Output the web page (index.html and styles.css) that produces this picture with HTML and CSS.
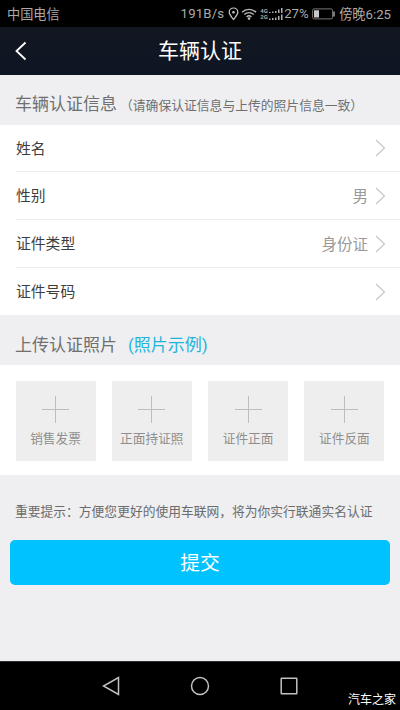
FILE: index.html
```
<!DOCTYPE html>
<html lang="zh-CN">
<head>
<meta charset="utf-8">
<title>车辆认证</title>
<link rel="stylesheet" href="styles.css">
</head>
<body>
<div class="status">
  <span class="carrier">中国电信</span>
  <span class="speed">191B/s</span>
  <svg class="pin" width="11" height="14" viewBox="0 0 11 14"><path d="M5.5 12.500C3.800 10.200 1.200 7.900 1.200 5.300a4.300 4.300 0 0 1 8.600 0c0 2.600-2.600 4.900-4.300 7.200z" fill="none" stroke="#c4c4c4" stroke-width="1.200"/><circle cx="5.500" cy="5.300" r="1.300" fill="#c4c4c4"/></svg>
  <svg class="wifi" width="16" height="12" viewBox="0 0 16 12"><g fill="none" stroke="#b8b8b8" stroke-width="1.400"><path d="M1 4.200a10 10 0 0 1 14 0"/><path d="M3.300 6.600a6.700 6.700 0 0 1 9.400 0"/><path d="M5.600 8.900a3.500 3.500 0 0 1 4.800 0"/></g><circle cx="8" cy="10.600" r="1.300" fill="#b8b8b8"/></svg>
  <span class="net"><span>4G</span><span>2G</span></span>
  <svg class="signal" width="14" height="13" viewBox="0 0 14 13"><g fill="#b0b0b0"><path d="M0 4h1.500v1H0zM3 3.500h1.500V5H3zM6 3h1.500v2H6zM9 1.500h1.500V5H9zM12 0h1.500v5H12z"/><path d="M0 10.500h1.500V12H0zM3 10h1.500v2H3zM6 9.500h1.500V12H6zM9 8h1.500v4H9zM12 6.500h1.500V12H12z"/></g></svg>
  <span class="percent">27%</span>
  <svg class="battery" width="24" height="12" viewBox="0 0 24 12"><rect x=".6" y=".9" width="20" height="10" rx="1.500" fill="none" stroke="#777" stroke-width="1"/><path d="M2 2.300h5v7.200H2z" fill="#c8c8c8"/><path d="M22 3.500v5" stroke="#999" stroke-width="1.600"/></svg>
  <span class="clock">傍晚6:25</span>
</div>
<header class="header">
  <svg class="back" width="12" height="20" viewBox="0 0 12 20"><path d="M10.500 1.500L1.500 10l9 8.500" fill="none" stroke="#fff" stroke-width="1.800"/></svg>
  <h1>车辆认证</h1>
</header>
<main>
  <h2 class="section section-info">车辆认证信息<small>（请确保认证信息与上传的照片信息一致）</small></h2>
  <ul class="rows">
    <li><span>姓名</span><span class="value"></span><svg width="11" height="18" viewBox="0 0 11 18"><path d="M1 1l8.500 8L1 17"/></svg></li>
    <li><span>性别</span><span class="value">男</span><svg width="11" height="18" viewBox="0 0 11 18"><path d="M1 1l8.500 8L1 17"/></svg></li>
    <li><span>证件类型</span><span class="value">身份证</span><svg width="11" height="18" viewBox="0 0 11 18"><path d="M1 1l8.500 8L1 17"/></svg></li>
    <li><span>证件号码</span><span class="value"></span><svg width="11" height="18" viewBox="0 0 11 18"><path d="M1 1l8.500 8L1 17"/></svg></li>
  </ul>
  <h2 class="section section-photo">上传认证照片<a class="example">(照片示例)</a></h2>
  <div class="tiles">
    <div class="tile"><svg width="27" height="27" viewBox="0 0 27 27"><path d="M13.500 0v27M0 13.500h27"/></svg><span>销售发票</span></div>
    <div class="tile"><svg width="27" height="27" viewBox="0 0 27 27"><path d="M13.500 0v27M0 13.500h27"/></svg><span>正面持证照</span></div>
    <div class="tile"><svg width="27" height="27" viewBox="0 0 27 27"><path d="M13.500 0v27M0 13.500h27"/></svg><span>证件正面</span></div>
    <div class="tile"><svg width="27" height="27" viewBox="0 0 27 27"><path d="M13.500 0v27M0 13.500h27"/></svg><span>证件反面</span></div>
  </div>
  <p class="notice">重要提示：方便您更好的使用车联网，将为你实行联通实名认证</p>
  <button class="submit">提交</button>
</main>
<nav class="nav">
  <svg width="18" height="20" viewBox="0 0 18 20"><path d="M16.500 1.500v17L1.500 10z"/></svg>
  <svg width="20" height="20" viewBox="0 0 20 20"><circle cx="10" cy="10" r="8.500"/></svg>
  <svg width="18" height="20" viewBox="0 0 18 20"><rect x="1.200" y="2.200" width="15.600" height="15.600" rx=".5"/></svg>
  <span class="watermark">汽车之家</span>
</nav>
</body>
</html>
```
FILE: styles.css
```
* { box-sizing: border-box; }
body {
  margin: 0;
  width: 400px;
  height: 710px;
  display: flex;
  flex-direction: column;
  overflow: hidden;
  background: #efeff2;
  font-family: Roboto, "Noto Sans CJK SC", sans-serif;
  white-space: nowrap;
}
h1, h2, p, ul { margin: 0; padding: 0; font-weight: 400; }
svg { display: block; flex: none; }

.status {
  height: 27px;
  flex: none;
  display: flex;
  align-items: center;
  padding: 1px 9px 0 7px;
  background: #000;
  color: #aaa;
  font-size: 13.2px;
  line-height: 26px;
}
.carrier { padding-top: 1px; }
.speed { margin-left: auto; letter-spacing: .15px; }
.pin { margin-left: 4px; }
.wifi { margin-left: 2px; }
.net {
  width: 8px;
  margin-left: 3px;
  display: flex;
  flex-direction: column;
  font-size: 6px;
  font-weight: 700;
  line-height: 6px;
}
.signal { margin-left: 1px; }
.percent { width: 26px; margin-left: 1px; }
.battery { margin-left: 2px; }
.clock { margin-left: 3px; padding-top: 1px; }

.header {
  height: 48px;
  flex: none;
  display: grid;
  grid-template-columns: 34px 1fr 34px;
  align-items: center;
  background: linear-gradient(#121721, #0e1624);
  color: #fff;
}
.back { margin-left: 15px; }
.header h1 { text-align: center; font-size: 21px; line-height: 48px; }

main { flex: 1; }
.section {
  display: flex;
  align-items: baseline;
  padding-left: 15px;
  color: #707070;
  font-size: 17px;
  line-height: 50px;
}
.section-info { height: 50px; padding-top: 4px; }
.section-info small { margin-left: 3px; font-size: 12.8px; }
.section-photo { height: 50px; padding-top: 5px; }
.example { margin-left: 11px; color: #1eb5dc; }

.rows { height: 190px; list-style: none; background: #fff; }
.rows li {
  height: 48px;
  margin-left: 16px;
  padding-right: 14px;
  display: flex;
  align-items: center;
  border-bottom: 1px solid #ececec;
  color: #3d3d3d;
  font-size: 14.8px;
}
.rows li:first-child { height: 47px; }
.rows li:last-child { height: 47px; border: 0; }
.rows span { padding-bottom: 2px; }
.value { margin-left: auto; margin-right: 7px; color: #999; font-size: 15.5px; }
.rows path { fill: none; stroke: #c7c7c7; stroke-width: 1.2; }

.tiles {
  height: 110px;
  display: flex;
  gap: 16.300px;
  padding: 15.500px 15.500px 0;
  background: #fff;
}
.tile {
  width: 80px;
  height: 80px;
  padding-top: 15px;
  display: flex;
  flex-direction: column;
  align-items: center;
  background: #eee;
  color: #8e8e8e;
  font-size: 12.700px;
  line-height: 18px;
}
.tile span { margin-top: 7px; }
.tile path { stroke: #bdbdbd; stroke-width: 1; }

.notice { padding: 27px 15px 0; color: #6c6c6c; font-size: 12.780px; line-height: 20px; }
.submit {
  display: block;
  width: 380px;
  height: 45px;
  margin: 18px 10px 0;
  padding: 0 0 3px;
  border: 0;
  border-radius: 5px;
  background: #00c2ff;
  color: #fff;
  font: inherit;
  font-size: 19.800px;
}

.nav {
  position: relative;
  height: 49px;
  flex: none;
  display: flex;
  justify-content: center;
  gap: 70px;
  padding-top: 14px;
  background: #000;
  border-top: 1px solid #303030;
}
.nav svg { fill: none; stroke: #c2c2c2; stroke-width: 1.500; }
.watermark {
  position: absolute;
  right: 4px;
  bottom: 1px;
  color: #fff;
  font-size: 12px;
  line-height: 18px;
}
```
